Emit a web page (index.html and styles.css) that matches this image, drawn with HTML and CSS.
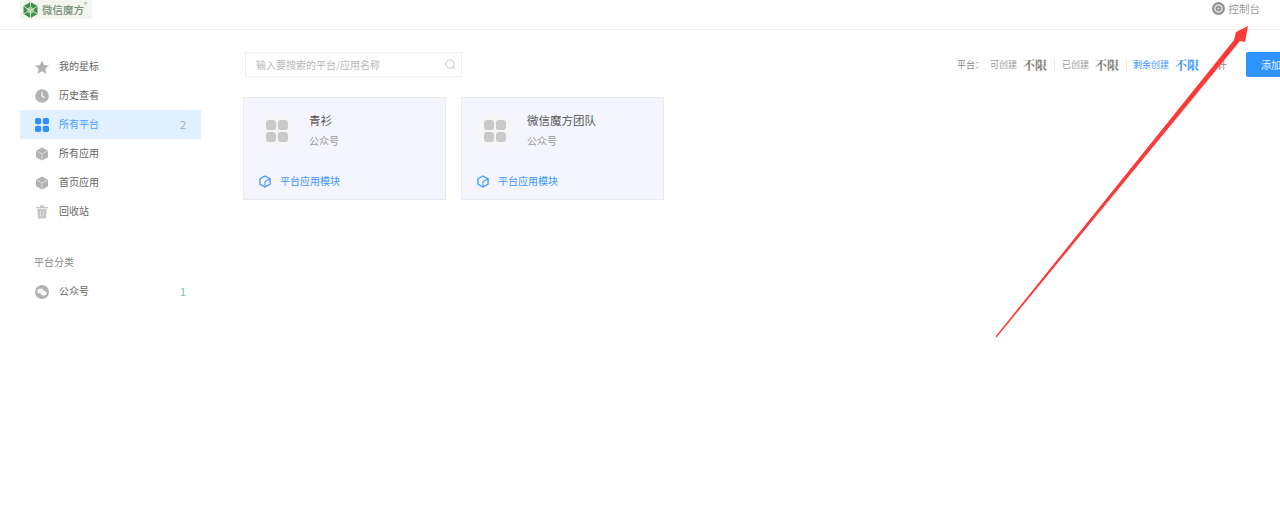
FILE: index.html
```html
<!DOCTYPE html>
<html lang="zh">
<head>
<meta charset="utf-8">
<title>微信魔方</title>
<link rel="stylesheet" href="styles.css">
</head>
<body>
<header class="topbar">
  <div class="logo">
    <svg class="logo-mark" width="17" height="18" viewBox="0 0 17 18"><path d="M8.500 1 15.500 5v8l-7 4-7-4V5z" fill="#3f8f4c"/><path d="M8.500 5.500 12 7.500v3.500l-3.500 2L5 11V7.500z" fill="#a9cfa6"/><path d="M8.500 1v4.500M1.500 5 5 7.500M15.500 5 12 7.500M1.500 13 5 11M15.500 13 12 11M8.500 17v-4M5 7.500l3.500 2 3.500-2M8.500 9.500V13" stroke="#dcebd6" stroke-width=".9" fill="none"/></svg>
    <span class="logo-text">微信魔方</span><sup class="logo-r">®</sup>
  </div>
  <a class="console">
    <svg width="13" height="13" viewBox="0 0 14 14"><circle cx="7" cy="7" r="7" fill="#8f8f8f"/><circle cx="7" cy="7" r="4.600" fill="#e4e4e4"/><circle cx="7" cy="7" r="3" fill="#8f8f8f"/><circle cx="7" cy="7" r="1.200" fill="#e4e4e4"/></svg>
    <span>控制台</span>
  </a>
</header>
<div class="layout">
  <aside class="sidebar">
    <ul class="menu">
      <li class="item"><svg class="ico" viewBox="0 0 14 14"><path d="M7 .5 9 5l5 .5-3.700 3.300 1.100 4.900L7 11.200l-4.400 2.500 1.100-4.900L0 5.500 5 5z" fill="#b2b2b2"/></svg><span class="label">我的星标</span></li>
      <li class="item"><svg class="ico" viewBox="0 0 14 14"><circle cx="7" cy="7" r="6.800" fill="#b2b2b2"/><path d="M7 3.200V7l2.600 1.900" fill="none" stroke="#fff" stroke-width="1.200"/></svg><span class="label">历史查看</span></li>
      <li class="item active"><svg class="ico" viewBox="0 0 14 14"><rect width="6.200" height="6.200" rx="1.800" fill="#2f8fff"/><rect x="7.800" width="6.200" height="6.200" rx="1.800" fill="#2f8fff"/><rect y="7.800" width="6.200" height="6.200" rx="1.800" fill="#2f8fff"/><rect x="7.800" y="7.800" width="6.200" height="6.200" rx="1.800" fill="#2f8fff"/></svg><span class="label">所有平台</span><span class="count">2</span></li>
      <li class="item"><svg class="ico" viewBox="0 0 14 14"><path d="M7 .5 13 3.700v6.600l-6 3.200-6-3.200V3.700z" fill="#b2b2b2"/><path d="M1.500 4 7 7l5.500-3M7 7v6" fill="none" stroke="#e4e4e4" stroke-width=".8"/></svg><span class="label">所有应用</span></li>
      <li class="item"><svg class="ico" viewBox="0 0 14 14"><path d="M7 .5 13 3.700v6.600l-6 3.200-6-3.200V3.700z" fill="#b2b2b2"/><path d="M1.500 4 7 7l5.500-3M7 7v6" fill="none" stroke="#e4e4e4" stroke-width=".8"/></svg><span class="label">首页应用</span></li>
      <li class="item"><svg class="ico" viewBox="0 0 14 14"><path d="M1 2.200h12v1H1zM5 .6h4v1.200H5z" fill="#b2b2b2"/><path d="M2.300 4h9.400l-.7 9.500H3z" fill="#c4c4c4"/><path d="M5.500 5.500v6M8.500 5.500v6" stroke="#e8e8e8" stroke-width=".8"/></svg><span class="label">回收站</span></li>
    </ul>
    <h3 class="group-title">平台分类</h3>
    <ul class="menu">
      <li class="item"><svg class="ico" viewBox="0 0 14 14"><circle cx="7" cy="7" r="7" fill="#b2b2b2"/><ellipse cx="5.600" cy="6" rx="3.300" ry="2.600" fill="#f2f2f2"/><ellipse cx="8.800" cy="8.200" rx="2.800" ry="2.200" fill="#fafafa"/></svg><span class="label">公众号</span><span class="count green">1</span></li>
    </ul>
  </aside>
  <main class="main">
    <div class="toolbar">
      <div class="search">
        <span class="placeholder">输入要搜索的平台/应用名称</span>
        <svg width="11" height="11" viewBox="0 0 11 11"><circle cx="5" cy="5" r="4.200" fill="none" stroke="#c4c8cc"/><path d="M8 8l2 2" stroke="#c4c8cc"/></svg>
      </div>
      <div class="stats">
        <span class="s-title">平台：</span>
        <span class="stat"><span class="s-key">可创建</span><b class="s-val">不限</b></span>
        <span class="stat sep"><span class="s-key">已创建</span><b class="s-val">不限</b></span>
        <span class="stat sep blue"><span class="s-key">剩余创建</span><b class="s-val">不限</b></span>
        <span class="s-extra">计</span>
        <button class="add">添加</button>
      </div>
    </div>
    <div class="cards">
      <article class="card">
        <div class="card-top">
          <div class="avatar"><svg width="22" height="22" viewBox="0 0 24 24"><rect width="11" height="11" rx="3.500" fill="#c9c9c9"/><rect x="13" width="11" height="11" rx="3.500" fill="#c9c9c9"/><rect y="13" width="11" height="11" rx="3.500" fill="#c9c9c9"/><rect x="13" y="13" width="11" height="11" rx="3.500" fill="#c9c9c9"/></svg></div>
          <div><div class="card-name">青衫</div><div class="card-type">公众号</div></div>
        </div>
        <div class="card-link"><svg width="12" height="13" viewBox="0 0 13 14"><path d="M6.500 1 12 4v6l-5.500 3L1 10V4z" fill="none" stroke="#3a95ff" stroke-width="1.400" stroke-linejoin="round"/><path d="M6.500 13V7L12 4" fill="none" stroke="#3a95ff" stroke-width="1.100"/></svg><span>平台应用模块</span></div>
      </article>
      <article class="card">
        <div class="card-top">
          <div class="avatar"><svg width="22" height="22" viewBox="0 0 24 24"><rect width="11" height="11" rx="3.500" fill="#c9c9c9"/><rect x="13" width="11" height="11" rx="3.500" fill="#c9c9c9"/><rect y="13" width="11" height="11" rx="3.500" fill="#c9c9c9"/><rect x="13" y="13" width="11" height="11" rx="3.500" fill="#c9c9c9"/></svg></div>
          <div><div class="card-name">微信魔方团队</div><div class="card-type">公众号</div></div>
        </div>
        <div class="card-link"><svg width="12" height="13" viewBox="0 0 13 14"><path d="M6.500 1 12 4v6l-5.500 3L1 10V4z" fill="none" stroke="#3a95ff" stroke-width="1.400" stroke-linejoin="round"/><path d="M6.500 13V7L12 4" fill="none" stroke="#3a95ff" stroke-width="1.100"/></svg><span>平台应用模块</span></div>
      </article>
    </div>
  </main>
</div>
<svg class="arrow" width="1280" height="527" viewBox="0 0 1280 527"><path d="M995.500 336.500 1234 40 1236 32 1248 26 1245 42 1240 41 996.500 337.500z" fill="#fb3a3a"/></svg>
</body>
</html>
```
FILE: styles.css
```css
* { box-sizing: border-box; }
html, body { margin: 0; height: 100%; overflow: hidden; background: #fff; }
body { position: relative; font-family: "Noto Sans CJK SC", "Liberation Sans", sans-serif; font-size: 10px; color: #666; }
ul { list-style: none; margin: 0; padding: 0; }

.topbar { height: 30px; border-bottom: 1px solid #eeeeee; display: flex; justify-content: space-between; align-items: flex-start; padding: 0 20px; }
.logo { width: 72px; height: 19px; background: #f4f5ee; display: flex; align-items: center; padding-left: 2px; color: #7a9a78; }
.logo-mark { flex: none; }
.logo-text { font-size: 10.500px; font-weight: 500; margin-left: 3px; line-height: 19px; white-space: nowrap; color: #6f8f6e; }
.logo-r { font-size: 6px; line-height: 1; align-self: flex-start; margin-top: 2px; }
.console { display: flex; align-items: center; gap: 4px; height: 17px; color: #999; font-size: 10.500px; }

.layout { display: flex; }
.sidebar { width: 201px; flex: none; padding: 22px 0 0 20px; }
.item { height: 29px; display: flex; align-items: center; padding: 0 15px; color: #666; }
.ico { width: 14px; height: 14px; flex: none; margin-right: 10px; }
.label { flex: 1; font-size: 10px; padding-bottom: 2px; }
.count { font-size: 11px; color: #aaa; padding-bottom: 2px; }
.count.green { color: #7fc0ac; }
.item.active { background: #e1f0ff; color: #4a9dff; }
.group-title { margin: 29px 0 0; padding-left: 14px; height: 14px; line-height: 14px; font-size: 10px; font-weight: 400; color: #888; }
.group-title + .menu { margin-top: 8px; }

.main { flex: 1; min-width: 0; padding: 22px 0 0 42px; }
.toolbar { display: flex; align-items: center; height: 25px; margin-left: 2px; }
.search { width: 217px; height: 25px; flex: none; border: 1px solid #eeeeee; display: flex; align-items: center; justify-content: space-between; padding: 0 5px 0 10px; }
.placeholder { color: #b8b8b8; font-size: 10px; white-space: nowrap; }
.stats { margin-left: 495px; display: flex; align-items: center; white-space: nowrap; flex: none; }
.s-title { color: #888; font-size: 9px; width: 33px; flex: none; }
.stat { display: flex; align-items: center; gap: 6px; padding-right: 7px; flex: none; }
.stat.sep { border-left: 1px solid #eee; padding-left: 7px; padding-right: 7px; height: 14px; }
.stat.sep.blue { padding-left: 6px; padding-right: 0; }
.s-key { color: #999; font-size: 9px; }
.s-val { font-family: "Noto Serif CJK SC", "Liberation Serif", "Noto Sans CJK SC", serif; font-size: 12px; font-weight: 700; color: #7d7d72; }
.blue .s-key, .blue .s-val { color: #3a95ff; }
.s-extra { color: #888; font-size: 10px; margin-left: 18px; width: 11px; flex: none; }
.add { margin-left: 18px; flex: none; width: 60px; height: 25px; border: 0; border-radius: 2px; background: #2f93ff; color: #e8f3ff; font: inherit; font-size: 10px; text-align: left; padding: 0 0 0 15px; }

.cards { display: flex; gap: 15px; margin-top: 20px; }
.card { width: 203px; height: 103px; background: #f4f5fe; border: 1px solid #e9eaf0; display: flex; flex-direction: column; justify-content: space-between; padding: 15px 14px 11px; }
.card-top { display: flex; gap: 14px; }
.avatar { width: 37px; height: 36px; border-radius: 50%; background: #f6f6f8; display: flex; align-items: center; justify-content: center; }
.card-name { font-size: 11.500px; line-height: 14px; color: #555; white-space: nowrap; }
.card-type { font-size: 10px; line-height: 14px; margin-top: 7px; color: #999; }
.card-link { display: flex; align-items: center; gap: 9px; padding-left: 1px; color: #3a95ff; font-size: 10px; line-height: 14px; }

.arrow { position: absolute; left: 0; top: 0; pointer-events: none; }
```
